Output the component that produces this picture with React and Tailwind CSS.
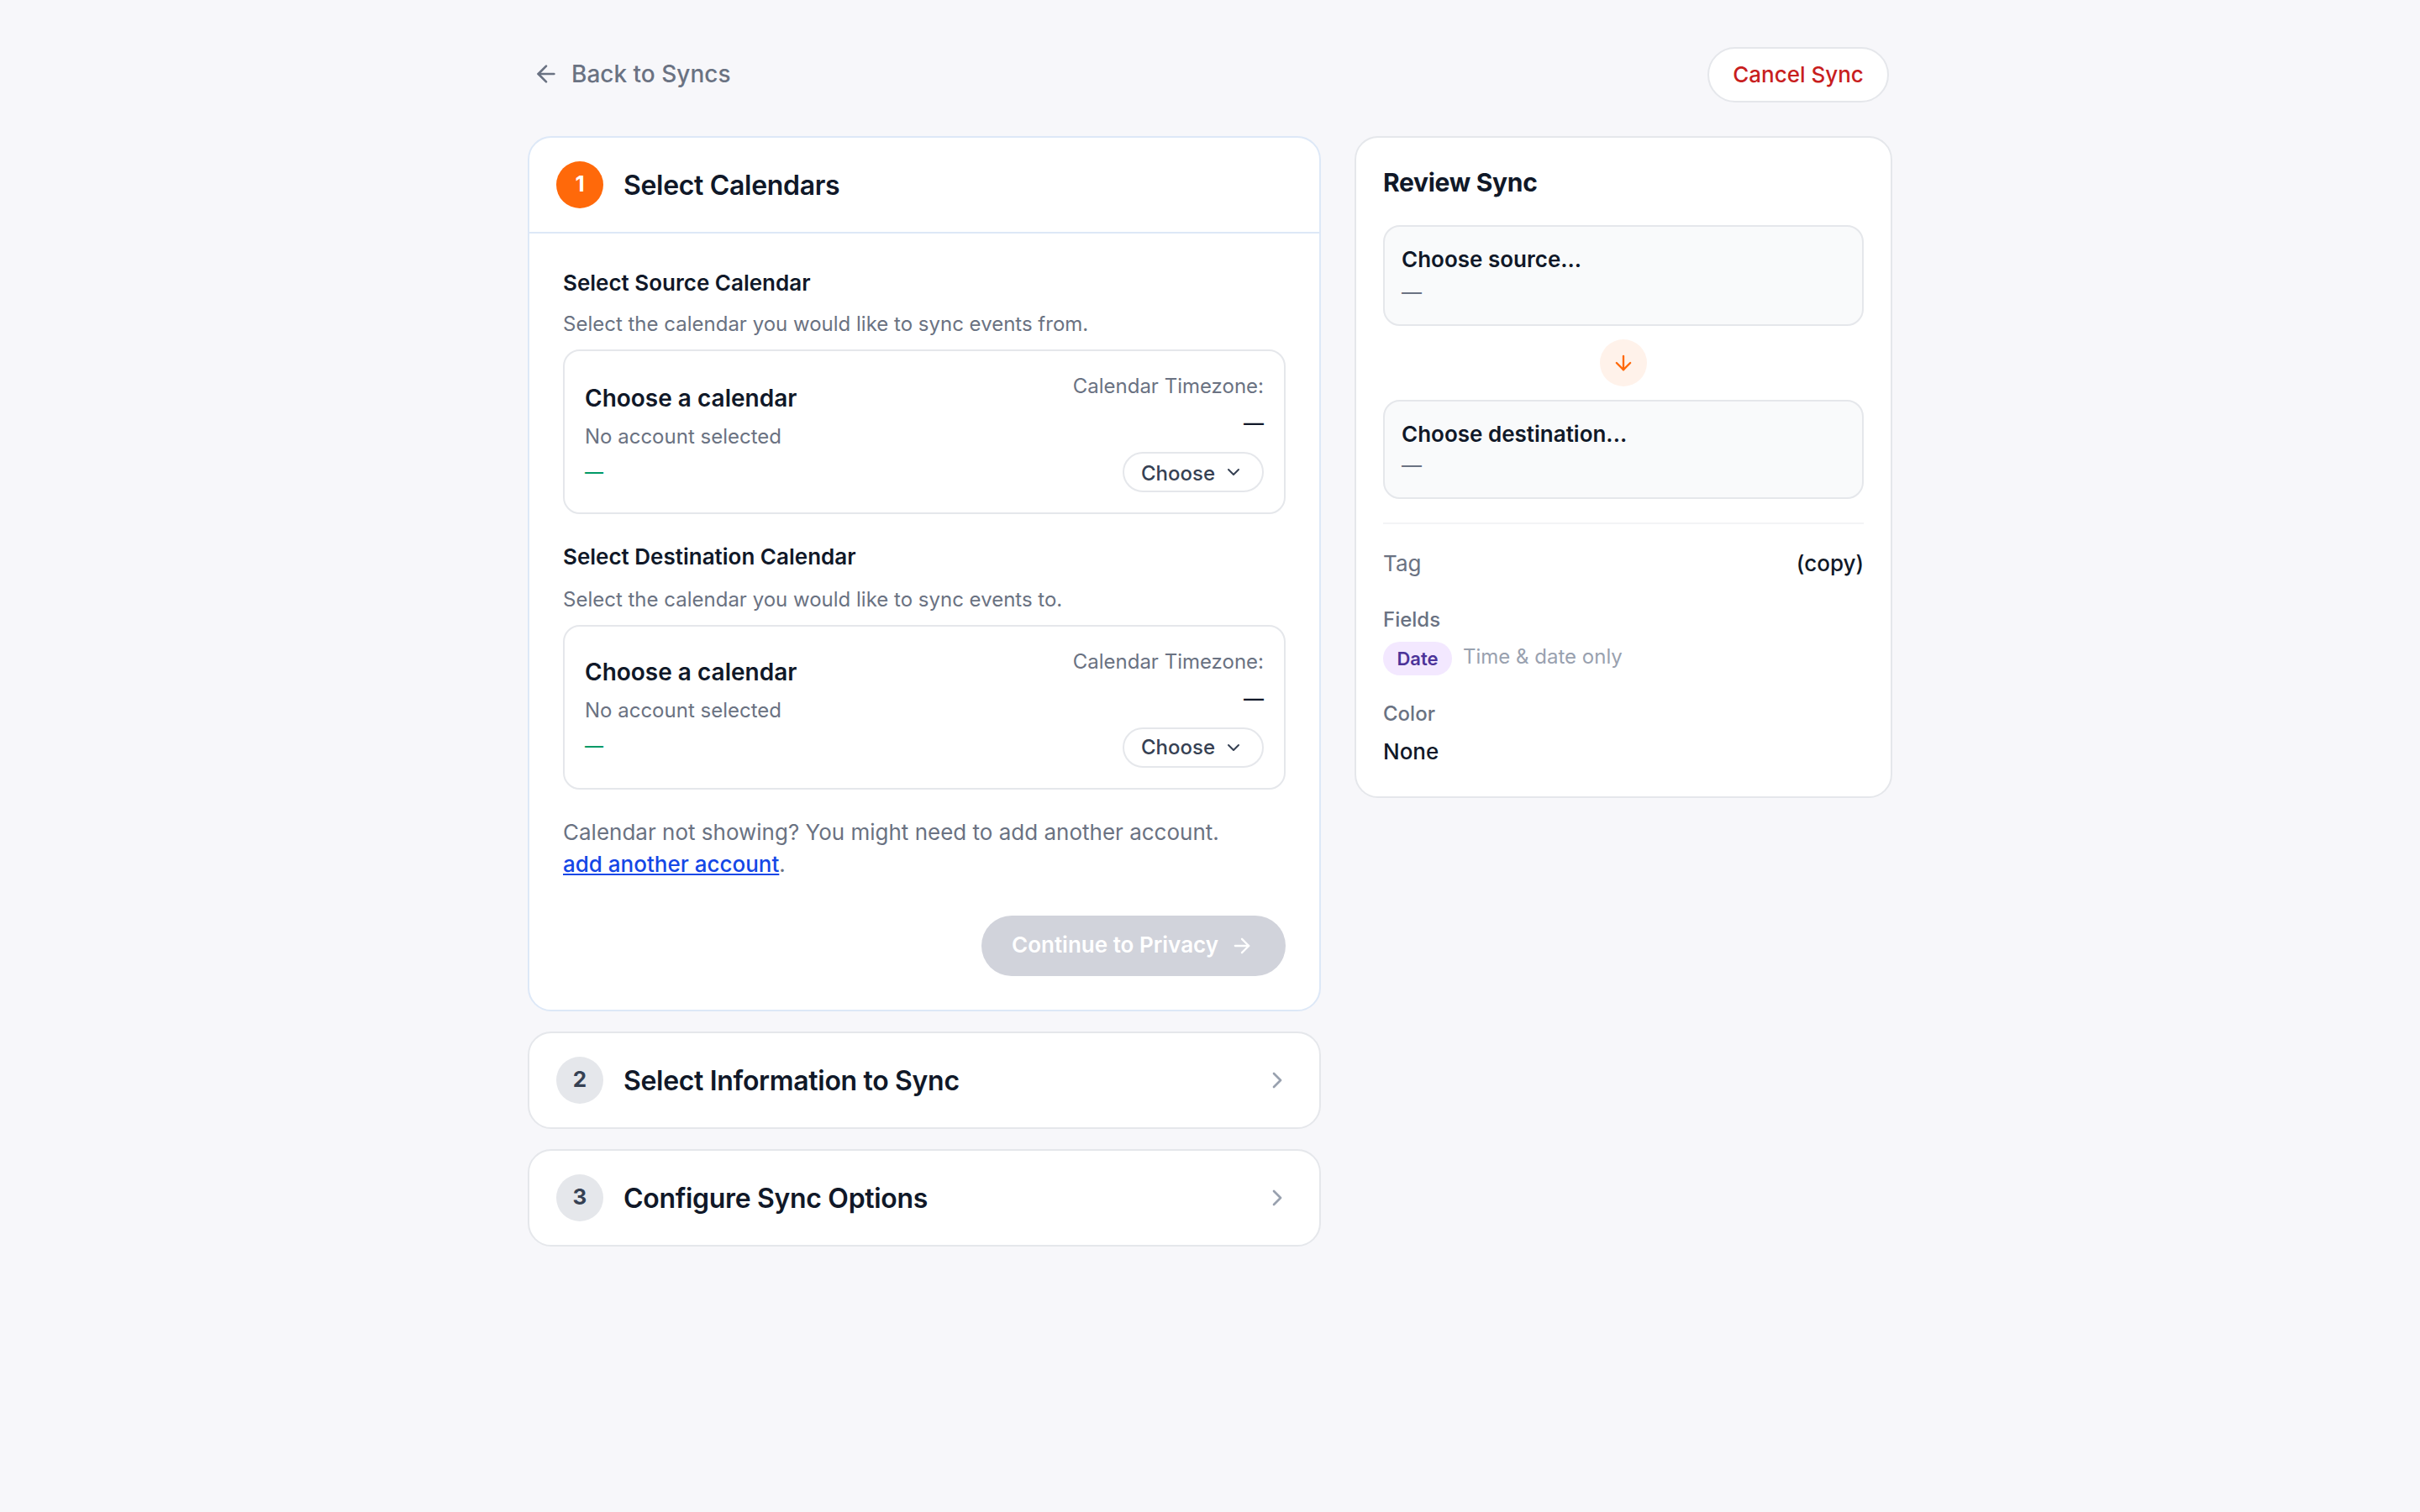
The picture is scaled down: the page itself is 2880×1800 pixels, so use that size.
import clsx from "clsx";
import { ArrowDown, ArrowLeft, ArrowRight, ChevronDown, ChevronRight } from "lucide-react";

function StepHeader({ number, title, active }) {
  return (
    <div className="flex h-28 items-center px-8">
      <div
        className={clsx(
          "flex size-14 items-center justify-center rounded-full pb-0.5 text-[26px] leading-9 font-bold",
          active ? "bg-[#ff690a] text-white" : "bg-gray-200 text-gray-700"
        )}
      >
        {number}
      </div>
      <h2 className="ml-6 pt-0.5 text-[32px] leading-10 font-semibold tracking-[-0.01em] text-gray-900">{title}</h2>
      {!active && <ChevronRight className="mr-0.5 ml-auto size-8 text-gray-400" />}
    </div>
  );
}

function CalendarPicker({ className, labelClassName }) {
  return (
    <div className="flex h-[196px] justify-between rounded-[20px] border-2 border-gray-200 px-6">
      <div className={className}>
        <p className="text-[28px] leading-10 font-semibold text-gray-900">Choose a calendar</p>
        <p className="mt-2 text-2xl leading-[35px] text-gray-500">No account selected</p>
        <p className="mt-[7px] text-[22px] leading-9 font-medium text-emerald-600">—</p>
      </div>
      <div className="flex flex-col items-end pt-6">
        <p className="text-2xl leading-[35px] text-gray-500">Calendar Timezone:</p>
        <p className="mt-[9px] text-2xl leading-[35px] font-medium text-gray-900">—</p>
        <button className="mt-[17px] flex h-12 w-[168px] items-start rounded-full border-2 border-gray-200 bg-white pl-5 text-gray-700">
          <span className={clsx("text-2xl leading-[35px] font-medium", labelClassName)}>Choose</span>
          <ChevronDown className="mt-2.5 ml-2.5 size-6" />
        </button>
      </div>
    </div>
  );
}

function ReviewBox({ title, className, dashClassName }) {
  return (
    <div className={clsx("rounded-[20px] border-2 border-gray-200 bg-gray-50 px-5 pt-5", className)}>
      <p className="text-[26px] leading-[38px] font-semibold text-gray-900">{title}</p>
      <p className={clsx("text-2xl leading-[35px] text-gray-500", dashClassName)}>—</p>
    </div>
  );
}

const upcomingSteps = [
  { number: 2, title: "Select Information to Sync" },
  { number: 3, title: "Configure Sync Options" },
];

export default function App() {
  return (
    <div className="min-h-screen bg-[#f7f7fa] pt-14 font-['Inter',sans-serif] antialiased">
      <div className="mx-auto w-[1624px]">
        {/* Top bar */}
        <div className="flex h-[66px] items-center justify-between pr-1 pl-1.5">
          <a href="#" className="flex items-center gap-3.5 pb-0.5 text-gray-500">
            <ArrowLeft className="size-8" />
            <span className="text-[28px] leading-10 font-medium">Back to Syncs</span>
          </a>
          <button className="h-[66px] w-[216px] rounded-full border-2 border-gray-200 bg-white text-[26px] leading-9 font-medium text-[#c81e1e]">
            Cancel Sync
          </button>
        </div>

        <div className="mt-10 flex items-start gap-10">
          {/* Steps */}
          <div className="flex w-[944px] flex-col gap-6">
            <section className="rounded-[28px] border-2 border-[#dde8f7] bg-white">
              <StepHeader number={1} title="Select Calendars" active />
              <div className="border-t-2 border-[#dde8f7] p-10">
                <h3 className="text-[26px] leading-[37px] font-semibold text-gray-900">Select Source Calendar</h3>
                <p className="my-[13px] text-2xl leading-[35px] text-gray-500">
                  Select the calendar you would like to sync events from.
                </p>
                <CalendarPicker className="pt-9" labelClassName="mt-1.5" />

                <h3 className="mt-8 text-[26px] leading-[37px] font-semibold text-gray-900">
                  Select Destination Calendar
                </h3>
                <p className="mt-[15px] mb-[13px] text-2xl leading-[35px] text-gray-500">
                  Select the calendar you would like to sync events to.
                </p>
                <CalendarPicker className="pt-[34px]" labelClassName="mt-1" />

                <p className="mt-8 text-[26px] leading-[38px] text-gray-500">
                  Calendar not showing? You might need to add another account.
                  <br />
                  <a href="#" className="font-medium text-blue-700 underline">
                    add another account
                  </a>
                  .
                </p>
                <div className="mt-[42px] flex justify-end">
                  <button
                    disabled
                    className="flex h-[72px] w-[362px] items-center justify-between rounded-full bg-[#d1d3db] pr-[38px] pl-9 text-white"
                  >
                    <span className="pb-0.5 text-[26px] leading-9 font-semibold">Continue to Privacy</span>
                    <ArrowRight className="size-7" />
                  </button>
                </div>
              </div>
            </section>

            {upcomingSteps.map((step) => (
              <section key={step.number} className="rounded-[28px] border-2 border-gray-200 bg-white">
                <StepHeader number={step.number} title={step.title} />
              </section>
            ))}
          </div>

          {/* Review panel */}
          <aside className="w-[640px] rounded-[28px] border-2 border-gray-200 bg-white px-8 pt-8 pb-[34px]">
            <h2 className="mb-[30px] text-3xl leading-[42px] font-bold tracking-[-0.01em] text-gray-900">
              Review Sync
            </h2>
            <ReviewBox title="Choose source..." className="h-[120px]" dashClassName="mt-0.5" />
            <div className="mx-auto my-4 flex size-14 items-center justify-center rounded-full bg-[#fff2ea]">
              <ArrowDown className="size-7 text-[#ff690a]" />
            </div>
            <ReviewBox title="Choose destination..." className="h-[118px]" />

            <div className="mt-7 flex justify-between border-t-2 border-gray-100 pt-7 text-[26px] leading-[38px]">
              <span className="text-gray-500">Tag</span>
              <span className="font-medium text-gray-900">(copy)</span>
            </div>

            <p className="mt-[30px] text-2xl leading-[35px] font-medium text-gray-500">Fields</p>
            <div className="mt-[9px] flex items-start gap-[13px]">
              <span className="flex h-10 w-[82px] items-center justify-center rounded-full bg-purple-100 text-[22px] leading-8 font-semibold text-[#4c3399]">
                Date
              </span>
              <span className="text-2xl leading-[35px] text-gray-400">Time &amp; date only</span>
            </div>

            <p className="mt-7 text-2xl leading-[35px] font-medium text-gray-500">Color</p>
            <p className="mt-[9px] text-[26px] leading-[38px] font-medium text-gray-900">None</p>
          </aside>
        </div>
      </div>
    </div>
  );
}
